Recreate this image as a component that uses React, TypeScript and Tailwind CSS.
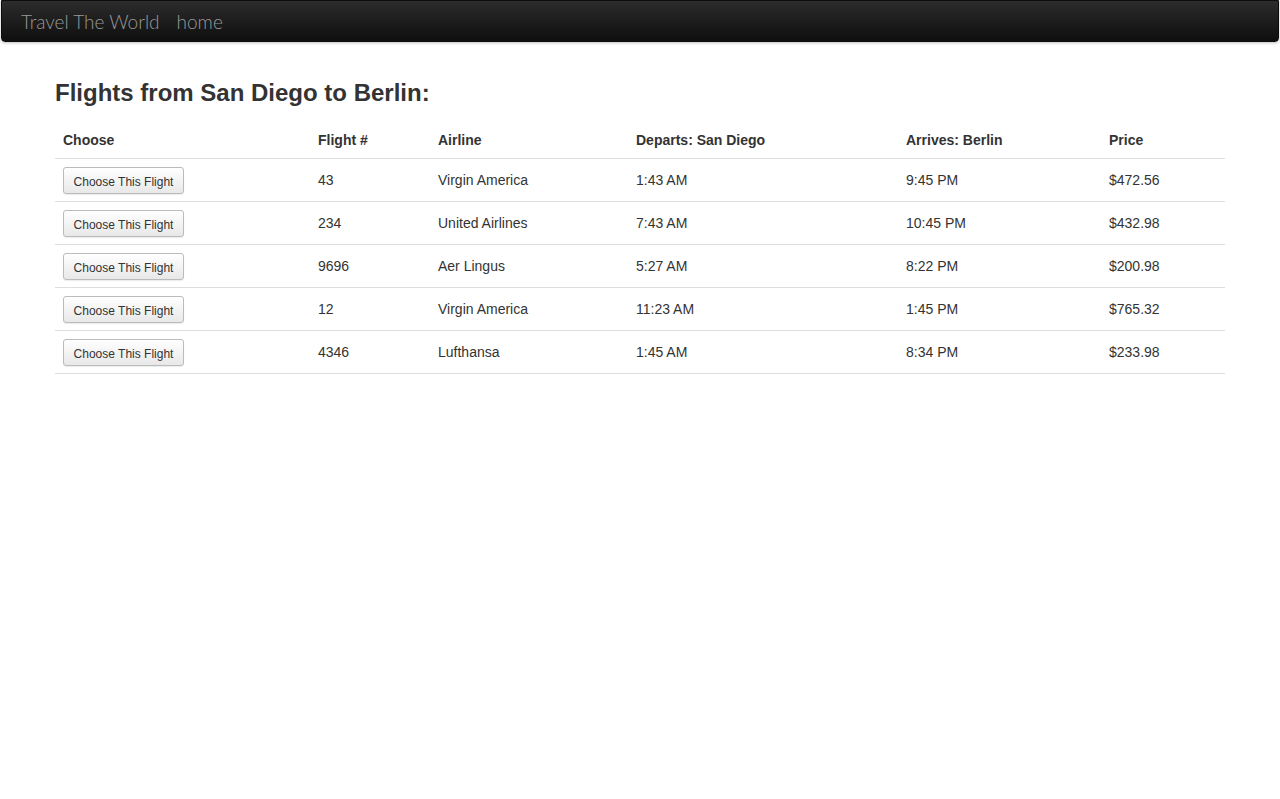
import React from "react";

interface Flight {
  number: string;
  airline: string;
  departs: string;
  arrives: string;
  price: string;
}

const flights: Flight[] = [
  { number: "43", airline: "Virgin America", departs: "1:43 AM", arrives: "9:45 PM", price: "$472.56" },
  { number: "234", airline: "United Airlines", departs: "7:43 AM", arrives: "10:45 PM", price: "$432.98" },
  { number: "9696", airline: "Aer Lingus", departs: "5:27 AM", arrives: "8:22 PM", price: "$200.98" },
  { number: "12", airline: "Virgin America", departs: "11:23 AM", arrives: "1:45 PM", price: "$765.32" },
  { number: "4346", airline: "Lufthansa", departs: "1:45 AM", arrives: "8:34 PM", price: "$233.98" },
];

const App: React.FC = () => {
  return (
    <div
      className="min-h-[799px] bg-white text-[#333] text-sm"
      style={{ fontFamily: '"Liberation Sans", Arial, sans-serif' }}
    >
      <nav className="mx-px h-[42px] flex items-center pl-[19px] pt-[1px] gap-[17px] rounded-b-[4px] border border-[#0d0d0d] bg-gradient-to-b from-[#2c2c2c] to-[#0f0f0f] shadow-[0_1px_3px_rgba(0,0,0,0.25)]">
        <span
          className="text-[19px] font-light text-[#999] leading-none"
          style={{ fontFamily: 'Lato, Roboto, "Liberation Sans", sans-serif' }}
        >
          Travel The World
        </span>
        <a
          className="text-[19px] font-light text-[#999] leading-none"
          style={{ fontFamily: 'Lato, Roboto, "Liberation Sans", sans-serif' }}
        >
          home
        </a>
      </nav>

      <div className="w-[1170px] mx-auto">
        <h3 className="mt-[38px] mb-[15px] text-[24px] font-bold leading-[26px] text-[#333]">
          Flights from San Diego to Berlin:
        </h3>
        <table className="w-full border-collapse table-fixed">
          <colgroup>
            <col className="w-[255px]" />
            <col className="w-[120px]" />
            <col className="w-[198px]" />
            <col className="w-[270px]" />
            <col className="w-[203px]" />
            <col className="w-[124px]" />
          </colgroup>
          <thead>
            <tr className="border-b border-[#ddd] text-left">
              <th className="px-2 pt-[9px] pb-[8px] leading-5 font-bold">Choose</th>
              <th className="px-2 pt-[9px] pb-[8px] leading-5 font-bold">Flight #</th>
              <th className="px-2 pt-[9px] pb-[8px] leading-5 font-bold">Airline</th>
              <th className="px-2 pt-[9px] pb-[8px] leading-5 font-bold">Departs: San Diego</th>
              <th className="px-2 pt-[9px] pb-[8px] leading-5 font-bold">Arrives: Berlin</th>
              <th className="px-2 pt-[9px] pb-[8px] leading-5 font-bold">Price</th>
            </tr>
          </thead>
          <tbody>
            {flights.map((f) => (
              <tr key={f.number} className="border-b border-[#ddd] h-[43px]">
                <td className="px-2 py-0">
                  <button className="h-[27px] w-[121px] rounded-[3px] border border-[#bbb] bg-gradient-to-b from-white to-[#e8e8e8] text-[12px] leading-none pt-[2px] text-[#333] shadow-[0_1px_1px_rgba(0,0,0,0.08)] mt-[1px]">
                    Choose This Flight
                  </button>
                </td>
                <td className="px-2">{f.number}</td>
                <td className="px-2">{f.airline}</td>
                <td className="px-2">{f.departs}</td>
                <td className="px-2">{f.arrives}</td>
                <td className="px-2">{f.price}</td>
              </tr>
            ))}
          </tbody>
        </table>
      </div>
    </div>
  );
};

export default App;
